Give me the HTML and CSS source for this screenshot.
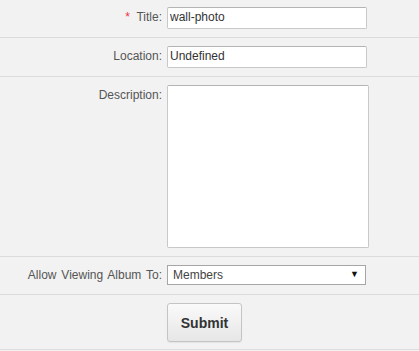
FILE: index.html
```html
<!DOCTYPE html>
<html>
<head>
<meta charset="utf-8">
<link rel="stylesheet" href="styles.css">
</head>
<body>
<form class="form">
  <div class="row">
    <label class="label"><span class="req">*</span> Title:</label>
    <div class="field"><input class="text" type="text" value="wall-photo"></div>
  </div>
  <div class="row">
    <label class="label">Location:</label>
    <div class="field"><input class="text" type="text" value="Undefined"></div>
  </div>
  <div class="row">
    <label class="label">Description:</label>
    <div class="field"><textarea class="area"></textarea></div>
  </div>
  <div class="row row-select">
    <label class="label">Allow Viewing Album To:</label>
    <div class="field">
      <div class="select-wrap">
        <select class="select"><option>Members</option></select>
        <span class="arrow">▼</span>
      </div>
    </div>
  </div>
  <div class="row row-submit">
    <div class="label"></div>
    <div class="field"><button class="btn" type="button">Submit</button></div>
  </div>
</form>
</body>
</html>
```
FILE: styles.css
```css
html, body {
  margin: 0;
  padding: 0;
  background: #f2f2f2;
}
body {
  font-family: "Liberation Sans", Arial, sans-serif;
  font-size: 12px;
  color: #555;
}
.form {
  margin: 0;
}
.row {
  display: grid;
  grid-template-columns: 162px 1fr;
  column-gap: 5px;
  padding: 7px 0 8px;
  border-bottom: 1px solid #dcdcdc;
}
.row + .row {
  padding-top: 8px;
}
.row-select {
  padding-bottom: 9px;
}
.row-submit {
  padding-bottom: 7px;
}
.label {
  text-align: right;
  padding-top: 3px;
  color: #555;
  line-height: 14px;
  word-spacing: 1.5px;
}
.req {
  color: #f0304a;
  margin-right: 2px;
}
.field {
  display: flex;
  align-items: flex-start;
}
.text {
  box-sizing: border-box;
  width: 200px;
  height: 22px;
  margin: 0;
  padding: 0 2px 2px;
  border: 1px solid #c8c8c8;
  border-top-color: #b4b4b4;
  border-radius: 2px;
  background: #fff;
  font-family: "Liberation Sans", Arial, sans-serif;
  font-size: 12px;
  color: #333;
  outline: none;
}
.area {
  box-sizing: border-box;
  width: 202px;
  height: 163px;
  margin: 0;
  padding: 2px;
  border: 1px solid #c8c8c8;
  border-top-color: #b4b4b4;
  border-radius: 2px;
  background: #fff;
  resize: none;
  outline: none;
}
.select-wrap {
  position: relative;
  width: 199px;
  height: 20px;
}
.select {
  -webkit-appearance: none;
  appearance: none;
  box-sizing: border-box;
  width: 199px;
  height: 20px;
  margin: 0;
  padding: 0 0 0 5px;
  border: 1px solid #a6a6a6;
  border-radius: 0;
  background: #fff;
  font-family: "Liberation Sans", Arial, sans-serif;
  font-size: 12px;
  color: #444;
  outline: none;
}
.arrow {
  position: absolute;
  right: 7px;
  top: 4px;
  font-size: 9px;
  line-height: 11px;
  color: #111;
  pointer-events: none;
}
.btn {
  box-sizing: border-box;
  width: 75px;
  height: 39px;
  margin: 0;
  padding: 0;
  border: 1px solid #c4c4c4;
  border-radius: 3px;
  background: linear-gradient(#fafafa, #e6e6e6);
  box-shadow: 0 1px 1px rgba(0,0,0,0.06);
  font-family: "Liberation Sans", Arial, sans-serif;
  font-size: 14px;
  font-weight: bold;
  color: #333;
}
```
